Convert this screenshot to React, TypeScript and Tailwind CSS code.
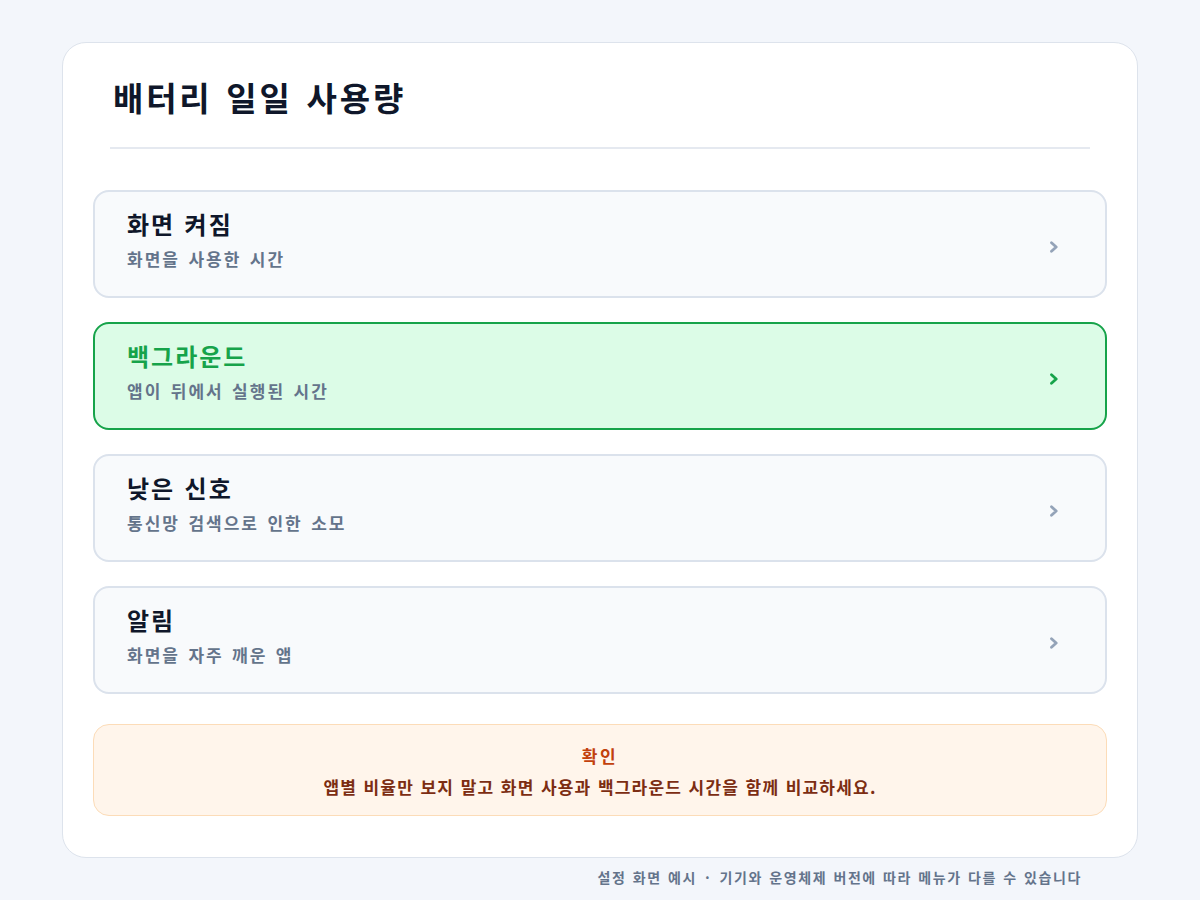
const ITEMS = [
  { id: 'screen', title: '화면 켜짐', desc: '화면을 사용한 시간' },
  { id: 'background', title: '백그라운드', desc: '앱이 뒤에서 실행된 시간' },
  { id: 'signal', title: '낮은 신호', desc: '통신망 검색으로 인한 소모' },
  { id: 'notify', title: '알림', desc: '화면을 자주 깨운 앱' },
];

const SELECTED = 'background';

function Chevron({ active }: { active: boolean }) {
  return (
    <svg
      viewBox="0 0 10 12"
      className={`mt-[5px] h-[12px] w-[10px] ${active ? 'text-[#16a34a]' : 'text-[#94a3b8]'}`}
      fill="none"
      stroke="currentColor"
      strokeWidth="2.8"
      strokeLinecap="round"
      strokeLinejoin="round"
    >
      <path d="M2.5 1.8 L7.2 6 L2.5 10.2" />
    </svg>
  );
}

export default function App() {
  return (
    <div className="min-h-[900px] w-[1200px] bg-[#f3f6fb] pt-[42px] font-['Noto_Sans_CJK_KR',sans-serif]">
      <div className="mx-auto w-[1076px] rounded-[24px] border border-[#dde3ec] bg-white px-[30px] pb-[41px]">
        {/* Header */}
        <div className="mx-[17px] border-b-2 border-[#e5e9f0] pt-[34px] pb-[30px]">
          <h1 className="pl-[3px] text-[33px] font-bold leading-[40px] tracking-[2.8px] [word-spacing:3.6px] text-[#0f172a]">
            배터리 일일 사용량
          </h1>
        </div>

        {/* Items */}
        <div className="mt-[41px] flex flex-col gap-[24px]">
          {ITEMS.map((item) => {
            const active = item.id === SELECTED;
            return (
              <div
                key={item.id}
                className={`flex h-[108px] items-center justify-between rounded-[16px] border-2 pl-[32px] pr-[46px] ${
                  active ? 'border-[#16a34a] bg-[#dcfce7]' : 'border-[#dbe2ec] bg-[#f8fafc]'
                }`}
              >
                <div className="pb-[8px]">
                  <p
                    className={`text-[24px] font-bold leading-[30px] tracking-[2px] [word-spacing:2px] ${
                      active ? 'text-[#16a34a]' : 'text-[#0f172a]'
                    }`}
                  >
                    {item.title}
                  </p>
                  <p className="mt-[8px] text-[17px] font-semibold leading-[24px] tracking-[2px] [word-spacing:2.6px] text-[#64748b]">
                    {item.desc}
                  </p>
                </div>
                <Chevron active={active} />
              </div>
            );
          })}
        </div>

        {/* Note */}
        <div className="mt-[30px] flex h-[92px] flex-col items-center rounded-[16px] border border-[#fcdcb8] bg-[#fff5eb] pt-[18px]">
          <p className="text-[17px] font-bold leading-[26px] tracking-[2.5px] text-[#c2410c]">확인</p>
          <p className="mt-[5px] text-[17px] font-bold leading-[26px] tracking-[1.2px] [word-spacing:1.4px] text-[#7c2d12]">
            앱별 비율만 보지 말고 화면 사용과 백그라운드 시간을 함께 비교하세요.
          </p>
        </div>
      </div>

      <p className="mt-[9px] w-[1082px] text-right text-[14px] font-semibold leading-[20px] tracking-[1.6px] [word-spacing:1.5px] text-[#64748b]">
        설정 화면 예시 · 기기와 운영체제 버전에 따라 메뉴가 다를 수 있습니다
      </p>
    </div>
  );
}
